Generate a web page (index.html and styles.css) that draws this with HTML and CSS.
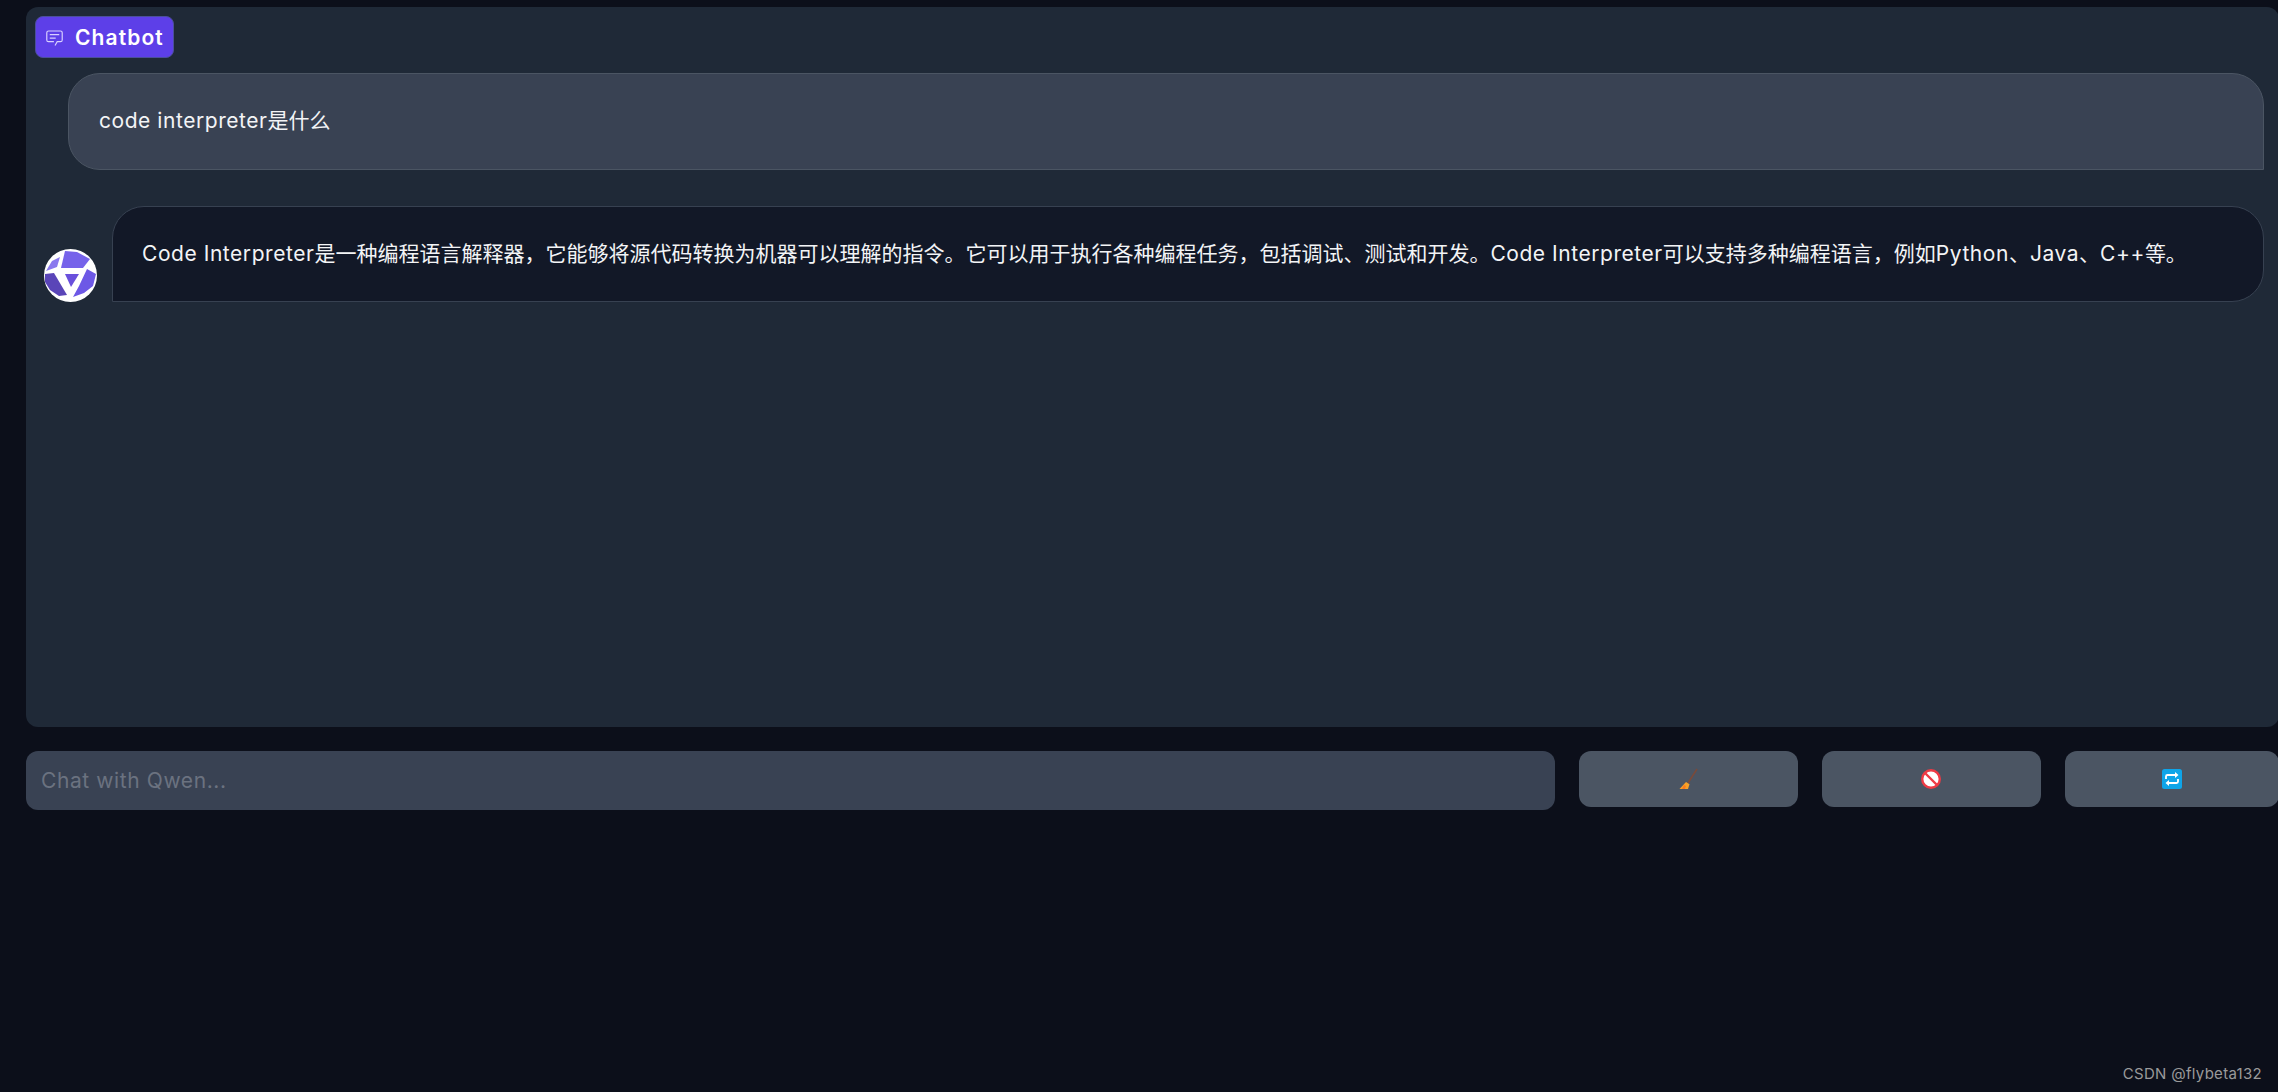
FILE: index.html
```html
<!DOCTYPE html>
<html lang="zh">
<head>
    <meta charset="UTF-8">
    <meta name="viewport" content="width=device-width, initial-scale=1.0">
    <title>Chatbot</title>
    <link rel="stylesheet" href="styles.css">
</head>
<body>
    <div class="page">
        <div class="chatbot">
            <div class="label">
                <svg class="label-icon" viewBox="0 0 32 32">
                    <path fill="currentColor" d="M17.74 30L16 29l4-7h6a2 2 0 0 0 2-2V8a2 2 0 0 0-2-2H6a2 2 0 0 0-2 2v12a2 2 0 0 0 2 2h9v2H6a4 4 0 0 1-4-4V8a4 4 0 0 1 4-4h20a4 4 0 0 1 4 4v12a4 4 0 0 1-4 4h-4.84Z"/>
                    <path fill="currentColor" d="M8 10h16v2H8zm0 6h10v2H8z"/>
                </svg>
                <span>Chatbot</span>
            </div>
            <div class="messages">
                <div class="row-user">
                    <div class="bubble bubble-user"><p><span class="lat">code interpreter</span>是什么</p></div>
                </div>
                <div class="row-bot">
                    <svg class="avatar" viewBox="0 0 53 53">
                        <defs>
                            <clipPath id="round"><circle cx="26.5" cy="26.5" r="26.5"/></clipPath>
                        </defs>
                        <g clip-path="url(#round)">
                            <rect width="53" height="53" fill="#fff"/>
                            <polygon points="21,2 33,3 46,10 39,19 17,19" fill="#7663ea"/>
                            <polygon points="8,12 16,8 13,18 2,22" fill="#8a78ee"/>
                            <polygon points="1,25 10,24 23,46 15,47 6,41 1,33" fill="#5a45b8"/>
                            <polygon points="43,20 52,25 49,37 40,44 29,48 35,37" fill="#6d58e6"/>
                            <polygon points="21,25 35,25 27,38" fill="#6a50dc"/>
                        </g>
                    </svg>
                    <div class="bubble bubble-bot"><p><span class="lat">Code Interpreter</span>是一种编程语言解释器，它能够将源代码转换为机器可以理解的指令。它可以用于执行各种编程任务，包括调试、测试和开发。<span class="lat">Code Interpreter</span>可以支持多种编程语言，例如<span class="lat">Python</span>、<span class="lat">Java</span>、<span class="lat">C++</span>等。</p></div>
                </div>
            </div>
        </div>
        <div class="input-row">
            <input class="chat-input" type="text" placeholder="Chat with Qwen...">
            <button class="btn" type="button">
                <svg class="emoji" viewBox="0 0 22 22">
                    <path d="M20 1L11 15" stroke="#7a4a3a" stroke-width="1.6" fill="none"/>
                    <path d="M9 14l3.500 2.200L11 21H2.500z" fill="#f7a128"/>
                    <path d="M7 17l2 1-1 3H5z" fill="#fb7a1e"/>
                </svg>
            </button>
            <button class="btn" type="button">
                <svg class="emoji" viewBox="0 0 22 22">
                    <circle cx="11" cy="11" r="8.800" fill="#fff" stroke="#ee3b45" stroke-width="2.400"/>
                    <path d="M5 5l12 12" stroke="#ee3b45" stroke-width="2.400"/>
                </svg>
            </button>
            <button class="btn" type="button">
                <svg class="emoji" viewBox="0 0 22 22">
                    <rect x="1" y="1" width="20" height="20" rx="2.500" fill="#0ea5e9"/>
                    <path d="M5 11V8.500A1.500 1.500 0 0 1 6.500 7H15M17 11v2.500a1.500 1.500 0 0 1-1.500 1.500H7" stroke="#fff" stroke-width="1.800" fill="none"/>
                    <path d="M14 4l3.500 3L14 10zM8 12l-3.500 3L8 18z" fill="#fff"/>
                </svg>
            </button>
        </div>
    </div>
    <div class="watermark">CSDN @flybeta132</div>
</body>
</html>
```

FILE: styles.css
```css
html, body {
    height: 100%;
}
body {
    margin: 0;
    background-color: #0c0f1a;
    font-family: Inter, "Noto Sans CJK SC", sans-serif;
    color: #f3f4f6;
    overflow: hidden;
}
.page {
    width: 2253px;
    padding: 7px 0 0 26px;
}
.chatbot {
    position: relative;
    box-sizing: border-box;
    height: 720px;
    padding: 66px 15px 0 18px;
    background-color: #1f2937;
    border-radius: 12px;
}
.label {
    position: absolute;
    top: 9px;
    left: 9px;
    display: flex;
    align-items: center;
    gap: 11px;
    box-sizing: border-box;
    height: 42px;
    width: 139px;
    padding-left: 9px;
    background-color: #5d3fe8;
    border: 1px solid #4b4f9a;
    border-radius: 8px;
    font-size: 21px;
    font-weight: 600;
    letter-spacing: 1.1px;
    color: #fff;
}
.label-icon {
    width: 19px;
    height: 19px;
    color: #d8d0ff;
}
.messages {
    display: flex;
    flex-direction: column;
    gap: 36px;
}
.row-user {
    padding-left: 24px;
}
.row-bot {
    display: flex;
    align-items: flex-end;
    gap: 15px;
}
.bubble {
    box-sizing: border-box;
    flex: 1;
    display: flex;
    align-items: center;
    font-size: 21px;
    border-style: solid;
    border-width: 1px;
}
.bubble p {
    margin: 0 0 5px;
}
.lat {
    letter-spacing: 0.55px;
}
.bubble-user {
    height: 97px;
    padding: 0 30px;
    background-color: #394253;
    border-color: #4b5563;
    border-radius: 32px 32px 0 32px;
}
.bubble-bot {
    height: 96px;
    padding: 0 29px;
    background-color: #121827;
    border-color: #374151;
    border-radius: 32px 32px 32px 0;
}
.avatar {
    flex: none;
    width: 53px;
    height: 53px;
}
.input-row {
    display: flex;
    gap: 24.5px;
    align-items: flex-start;
    margin-top: 24px;
}
.chat-input {
    box-sizing: border-box;
    width: 1528.5px;
    height: 59px;
    padding: 0 15px;
    background-color: #394253;
    border: none;
    border-radius: 12px;
    font-family: inherit;
    font-size: 21px;
    letter-spacing: 0.6px;
    color: #f3f4f6;
}
.chat-input::placeholder {
    color: #6b7280;
}
.btn {
    flex: 0 0 218.5px;
    height: 56px;
    display: flex;
    align-items: center;
    justify-content: center;
    padding: 0;
    background-color: #4b5563;
    border: none;
    border-radius: 12px;
}
.btn:last-child {
    flex: 1;
}
.emoji {
    width: 22px;
    height: 22px;
}
.watermark {
    position: absolute;
    right: 16px;
    bottom: 9px;
    font-size: 15px;
    letter-spacing: 0.3px;
    color: #9a9a9a;
}
```
